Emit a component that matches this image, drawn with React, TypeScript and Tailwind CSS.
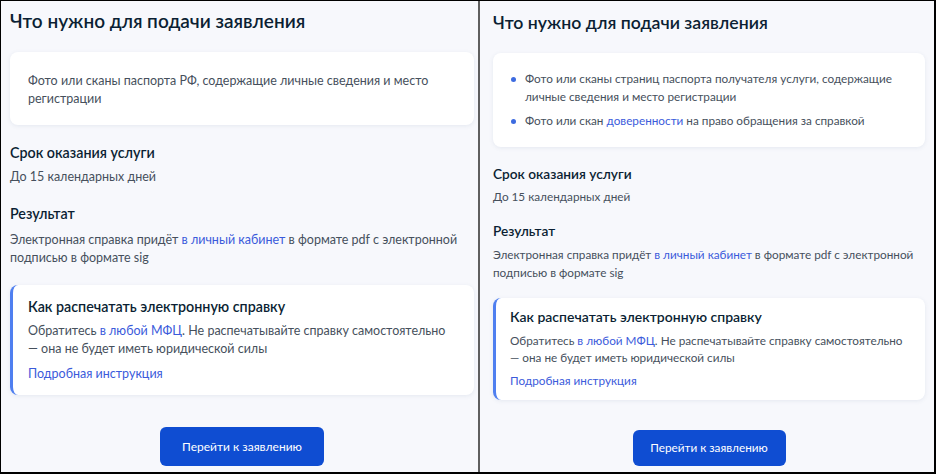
const link = 'text-[#3b5bdb]'

type Size = {
    panel: string
    heading: string
    card: string
    body: string
    title: string
    gaps: {
        card: string
        term: string
        termText: string
        result: string
        resultText: string
        note: string
        noteText: string
        noteLink: string
        button: string
    }
    note: string
    noteTitle: string
    noteBody: string
    button: string
}

const big: Size = {
    panel: 'w-[477px] pl-[9px] pr-[4px] pt-[8px]',
    heading: 'text-[19px] leading-[24px]',
    card: 'px-[18px] pt-[20px] pb-[17px]',
    body: 'text-[12.5px] leading-[18px]',
    title: 'text-[14.3px] leading-[22px]',
    gaps: {
        card: 'mt-[19px]',
        term: 'mt-[17px]',
        termText: 'mt-[4px]',
        result: 'mt-[17px]',
        resultText: 'mt-[6px]',
        note: 'mt-[18px]',
        noteText: 'mt-[4px]',
        noteLink: 'mt-[7px]',
        button: 'mt-[32px]'
    },
    note: 'pl-[15px] pr-[10px] pt-[11px] pb-[12px]',
    noteTitle: 'text-[14.3px] leading-[22px]',
    noteBody: 'text-[12.5px] leading-[18px]',
    button: 'w-[164px] h-[39px] text-[12px]'
}

const small: Size = {
    panel: 'flex-1 pl-[13px] pr-[9px] pt-[10px]',
    heading: 'text-[17.7px] leading-[24px]',
    card: 'px-[18px] pt-[17px] pb-[17px]',
    body: 'text-[11.75px] leading-[18px]',
    title: 'text-[13.7px] leading-[20px]',
    gaps: {
        card: 'mt-[18px]',
        term: 'mt-[17px]',
        termText: 'mt-[4px]',
        result: 'mt-[15px]',
        resultText: 'mt-[5px]',
        note: 'mt-[16px]',
        noteText: 'mt-[5px]',
        noteLink: 'mt-[6px]',
        button: 'mt-[30px]'
    },
    note: 'pl-[14px] pr-[10px] pt-[9px] pb-[11px]',
    noteTitle: 'text-[14px] leading-[20px]',
    noteBody: 'text-[11.75px] leading-[17px]',
    button: 'w-[153px] h-[36px] text-[11.75px]'
}

function Panel({ size, children }: { size: Size; children: React.ReactNode }) {
    const g = size.gaps
    return (
        <div className={`flex flex-col bg-[#f7f8fc] ${size.panel}`}>
            <h2 className={`font-semibold text-[#0b1f33] ${size.heading}`}>
                Что нужно для подачи заявления
            </h2>

            <div className={`bg-white rounded-[8px] shadow-[0_1px_4px_rgba(100,120,160,0.12)] text-[#46505c] ${g.card} ${size.card} ${size.body}`}>
                {children}
            </div>

            <h3 className={`font-semibold text-[#0b1f33] ${g.term} ${size.title}`}>Срок оказания услуги</h3>
            <p className={`text-[#46505c] ${g.termText} ${size.body}`}>До 15 календарных дней</p>

            <h3 className={`font-semibold text-[#0b1f33] ${g.result} ${size.title}`}>Результат</h3>
            <p className={`text-[#46505c] ${g.resultText} ${size.body}`}>
                Электронная справка придёт <span className={link}>в личный кабинет</span> в формате pdf с электронной
                подписью в формате sig
            </p>

            <div className={`bg-white rounded-[8px] border-l-[3px] border-[#4f7ff0] shadow-[0_1px_4px_rgba(100,120,160,0.12)] ${g.note} ${size.note}`}>
                <h3 className={`font-semibold text-[#0b1f33] ${size.noteTitle}`}>Как распечатать электронную справку</h3>
                <p className={`text-[#46505c] ${g.noteText} ${size.noteBody}`}>
                    Обратитесь <span className={link}>в любой МФЦ</span>. Не распечатывайте справку самостоятельно
                    {' —\u00a0она'} не будет иметь юридической силы
                </p>
                <p className={`${link} ${g.noteLink} ${size.noteBody}`}>Подробная инструкция</p>
            </div>

            <button className={`self-center rounded-[6px] bg-[#0f4dd2] text-white ${g.button} ${size.button}`}>
                Перейти к заявлению
            </button>
        </div>
    )
}

export default function App() {
    return (
        <div className="w-[936px] h-[474px] flex border-t border-l border-r-2 border-b-2 border-black font-['Lato','Noto_Sans',sans-serif] overflow-hidden">
            <Panel size={big}>
                <p>Фото или сканы паспорта РФ, содержащие личные сведения и место регистрации</p>
            </Panel>

            <div className="w-[2px] bg-[#5f5f5f]" />

            <Panel size={small}>
                <ul className="flex flex-col gap-[6px]">
                    <li className="flex gap-[9px]">
                        <span className="mt-[7px] w-[5px] h-[5px] rounded-full bg-[#3d6be0] shrink-0" />
                        <span>
                            Фото или сканы страниц паспорта получателя услуги, содержащие личные сведения и место
                            регистрации
                        </span>
                    </li>
                    <li className="flex gap-[9px]">
                        <span className="mt-[7px] w-[5px] h-[5px] rounded-full bg-[#3d6be0] shrink-0" />
                        <span>
                            Фото или скан <span className={link}>доверенности</span> на право обращения за справкой
                        </span>
                    </li>
                </ul>
            </Panel>
        </div>
    )
}
